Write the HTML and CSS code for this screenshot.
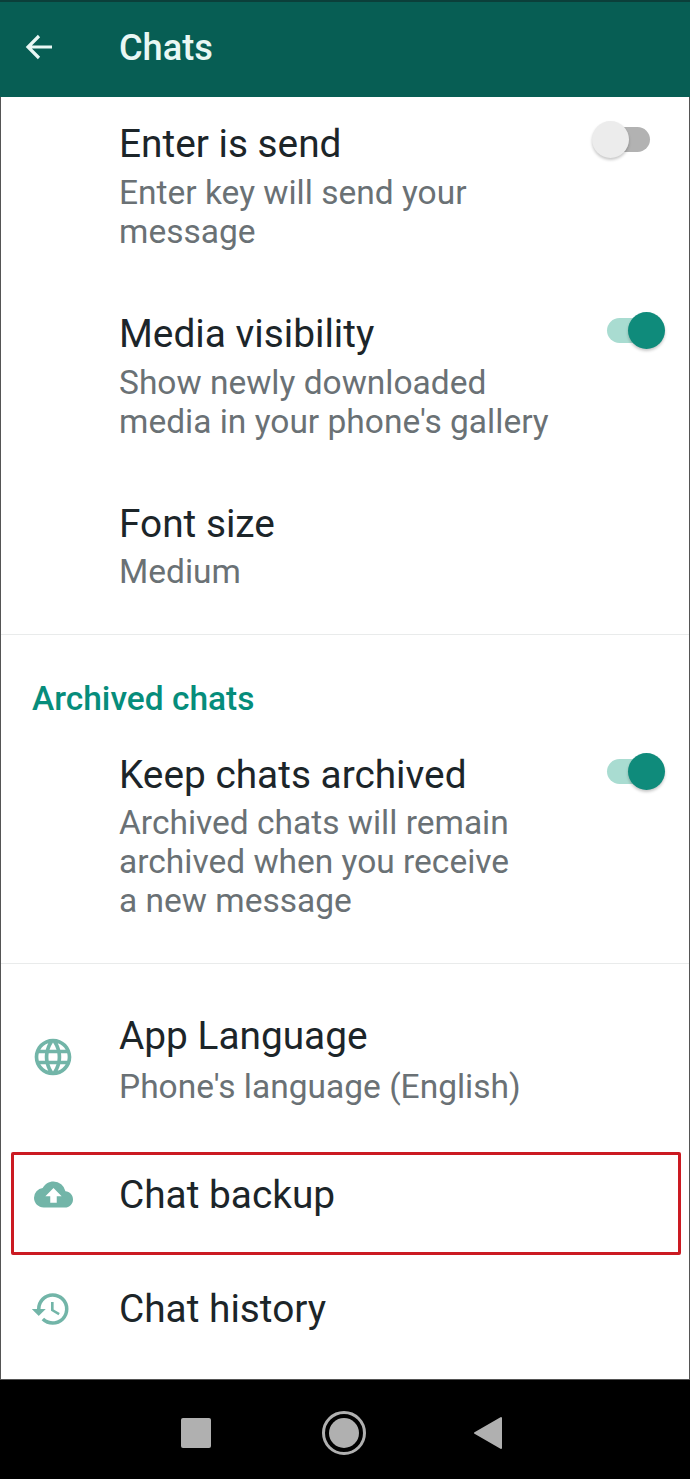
FILE: index.html
```html
<!DOCTYPE html>
<html lang="en">
<head>
<meta charset="utf-8">
<title>Chats</title>
<link rel="stylesheet" href="styles.css">
</head>
<body>
<div class="screen">
  <header class="appbar">
    <svg class="back" viewBox="0 0 32 32" width="32" height="32"><path d="M29 16H5M16 5 5 16l11 11" fill="none" stroke="#e9f7f4" stroke-width="3.2"/></svg>
    <h1 class="appbar-title">Chats</h1>
  </header>
  <main class="content">
    <div class="row row-first">
      <div class="icon-col"></div>
      <div class="text"><div class="title">Enter is send</div><div class="sub">Enter key will send your<br>message</div></div>
      <div class="switch off"><span class="track"></span><span class="thumb"></span></div>
    </div>
    <div class="row">
      <div class="icon-col"></div>
      <div class="text"><div class="title">Media visibility</div><div class="sub">Show newly downloaded<br>media in your phone's gallery</div></div>
      <div class="switch on"><span class="track"></span><span class="thumb"></span></div>
    </div>
    <div class="row">
      <div class="icon-col"></div>
      <div class="text"><div class="title">Font size</div><div class="sub sub-tight">Medium</div></div>
    </div>
    <hr class="divider">
    <h2 class="section">Archived chats</h2>
    <div class="row row-archived">
      <div class="icon-col"></div>
      <div class="text"><div class="title">Keep chats archived</div><div class="sub">Archived chats will remain<br>archived when you receive<br>a new message</div></div>
      <div class="switch on"><span class="track"></span><span class="thumb"></span></div>
    </div>
    <hr class="divider">
    <div class="row row-lang">
      <div class="icon-col icon-mid">
        <svg viewBox="0 0 24 24" width="44" height="44"><path fill="#72b5a8" d="M11.99 2C6.47 2 2 6.48 2 12s4.47 10 9.99 10C17.52 22 22 17.52 22 12S17.52 2 11.99 2zm6.93 6h-2.95a15.65 15.65 0 0 0-1.38-3.56A8.03 8.03 0 0 1 18.92 8zM12 4.04c.83 1.2 1.48 2.53 1.91 3.96h-3.82c.43-1.43 1.08-2.76 1.91-3.96zM4.26 14C4.1 13.36 4 12.69 4 12s.1-1.36.26-2h3.38c-.08.66-.14 1.32-.14 2s.06 1.34.14 2H4.26zm.82 2h2.95c.32 1.25.78 2.45 1.38 3.56A7.987 7.987 0 0 1 5.08 16zm2.95-8H5.08a7.987 7.987 0 0 1 4.33-3.56A15.65 15.65 0 0 0 8.03 8zM12 19.96c-.83-1.2-1.48-2.53-1.91-3.96h3.82c-.43 1.43-1.08 2.76-1.91 3.96zM14.34 14H9.66c-.09-.66-.16-1.32-.16-2s.07-1.35.16-2h4.68c.09.65.16 1.32.16 2s-.07 1.34-.16 2zm.25 5.56c.6-1.11 1.06-2.31 1.38-3.56h2.95a8.03 8.03 0 0 1-4.33 3.56zM16.36 14c.08-.66.14-1.32.14-2s-.06-1.34-.14-2h3.38c.16.64.26 1.31.26 2s-.1 1.36-.26 2h-3.38z"/></svg>
      </div>
      <div class="text"><div class="title">App Language</div><div class="sub sub-lang">Phone's language (English)</div></div>
    </div>
    <div class="row row-backup">
      <div class="icon-col icon-mid">
        <svg viewBox="0 0 24 24" width="39" height="39"><path fill="#72b5a8" d="M19.35 10.04A7.49 7.49 0 0 0 12 4C9.11 4 6.6 5.64 5.35 8.04A5.994 5.994 0 0 0 0 14c0 3.31 2.69 6 6 6h13c2.76 0 5-2.24 5-5 0-2.64-2.05-4.78-4.65-4.96zM14 13v4h-4v-4H7l5-5 5 5h-3z"/></svg>
      </div>
      <div class="text"><div class="title">Chat backup</div></div>
    </div>
    <div class="row row-history">
      <div class="icon-col icon-mid">
        <svg viewBox="0 0 24 24" width="42" height="42"><path fill="#72b5a8" d="M13 3a9 9 0 0 0-9 9H1l3.89 3.89.07.14L9 12H6a7 7 0 1 1 2.05 4.95l-1.42 1.42A8.954 8.954 0 0 0 13 21a9 9 0 0 0 0-18zm-1 5v5l4.28 2.54.72-1.21-3.5-2.08V8H12z"/></svg>
      </div>
      <div class="text"><div class="title">Chat history</div></div>
    </div>
    <div class="highlight"></div>
  </main>
  <nav class="navbar">
    <span class="nav-square"></span>
    <span class="nav-home"><span class="nav-home-dot"></span></span>
    <svg class="nav-back" viewBox="0 0 30 34" width="30" height="34"><path d="M28 2v30L2 17z" fill="#b0b0b0" stroke="#b0b0b0" stroke-width="2" stroke-linejoin="round"/></svg>
  </nav>
</div>
</body>
</html>
```

FILE: styles.css
```css
* { box-sizing: border-box; }
html, body { margin: 0; padding: 0; }
body { width: 690px; height: 1479px; overflow: hidden; background: #fff; font-family: Roboto, "Noto Sans", sans-serif; }
.screen { width: 690px; height: 1479px; display: flex; flex-direction: column; position: relative; }
.appbar { height: 97px; flex: none; background: #075e54; border-top: 2px solid #0b3f3a; display: flex; align-items: center; padding: 0 0 2px 23px; box-shadow: 0 2px 2px rgba(7,94,84,.1); position: relative; }
.back { flex: none; position: relative; top: -2px; }
.appbar-title { margin: 0 0 0 64px; font-size: 36.2px; line-height: 40px; font-weight: 500; color: #e9f7f4; position: relative; top: -1px; }
.content { flex: 1; position: relative; border-left: 1px solid #555; border-right: 1px solid #555; background: #fff; }
.row { display: flex; align-items: flex-start; margin-top: 63.5px; }
.row-first { margin-top: 27px; }
.row-archived { margin-top: 36px; }
.row-lang { margin-top: 52px; }
.row-backup { margin-top: 69.5px; }
.row-history { margin-top: 74px; }
.icon-col { width: 118px; flex: none; }
.icon-mid { display: flex; justify-content: center; padding-right: 14px; }
.row-lang .icon-mid { padding-top: 19px; }
.row-backup .icon-mid { margin-top: 0; padding-right: 14px; }
.row-history .icon-mid { margin-top: -1px; padding-right: 18px; }
.text { flex: 1; min-width: 0; }
.title { font-size: 38.8px; line-height: 40px; color: #1c2529; }
.sub { font-size: 33.5px; line-height: 39px; color: #6a7175; margin-top: 8.5px; }
.sub-tight { margin-top: 7.5px; }
.sub-lang { margin-top: 10.5px; }
.switch { position: relative; flex: none; width: 74px; height: 36px; margin-right: 24px; }
.track { position: absolute; width: 57px; height: 25px; border-radius: 13px; }
.thumb { position: absolute; width: 37px; height: 37px; border-radius: 50%; box-shadow: 0 2px 3px rgba(0,0,0,.22); }
.switch.off { margin-top: -4px; }
.switch.off .track { left: 2px; top: 7px; background: #b2b2b2; }
.switch.off .thumb { left: 1px; top: 1px; background: #ececec; }
.switch.on { margin-top: -2px; }
.switch.on .track { left: 16px; top: 6px; background: #a9dcd1; }
.switch.on .thumb { left: 37px; top: 0; background: #0f8b7b; }
.divider { margin: 43px 0 0; border: 0; border-top: 1px solid #e9ebeb; height: 1px; }
.section { margin: 44px 0 0 31px; font-size: 33.5px; line-height: 40px; font-weight: 500; color: #068d7b; }
.highlight { position: absolute; left: 10px; top: 1055px; width: 670px; height: 103px; border: 3px solid #cb1a22; border-radius: 2px; }
.navbar { height: 100px; flex: none; background: #000; border-top: 1px solid #555; display: flex; align-items: center; padding: 6px 0 0 181px; }
.nav-square { width: 30px; height: 30px; background: #b0b0b0; border-radius: 2px; flex: none; }
.nav-home { width: 44px; height: 44px; margin-left: 111px; border: 3px solid #b0b0b0; border-radius: 50%; display: flex; align-items: center; justify-content: center; flex: none; }
.nav-home-dot { width: 30px; height: 30px; border-radius: 50%; background: #b0b0b0; }
.nav-back { margin-left: 107px; flex: none; }
```
